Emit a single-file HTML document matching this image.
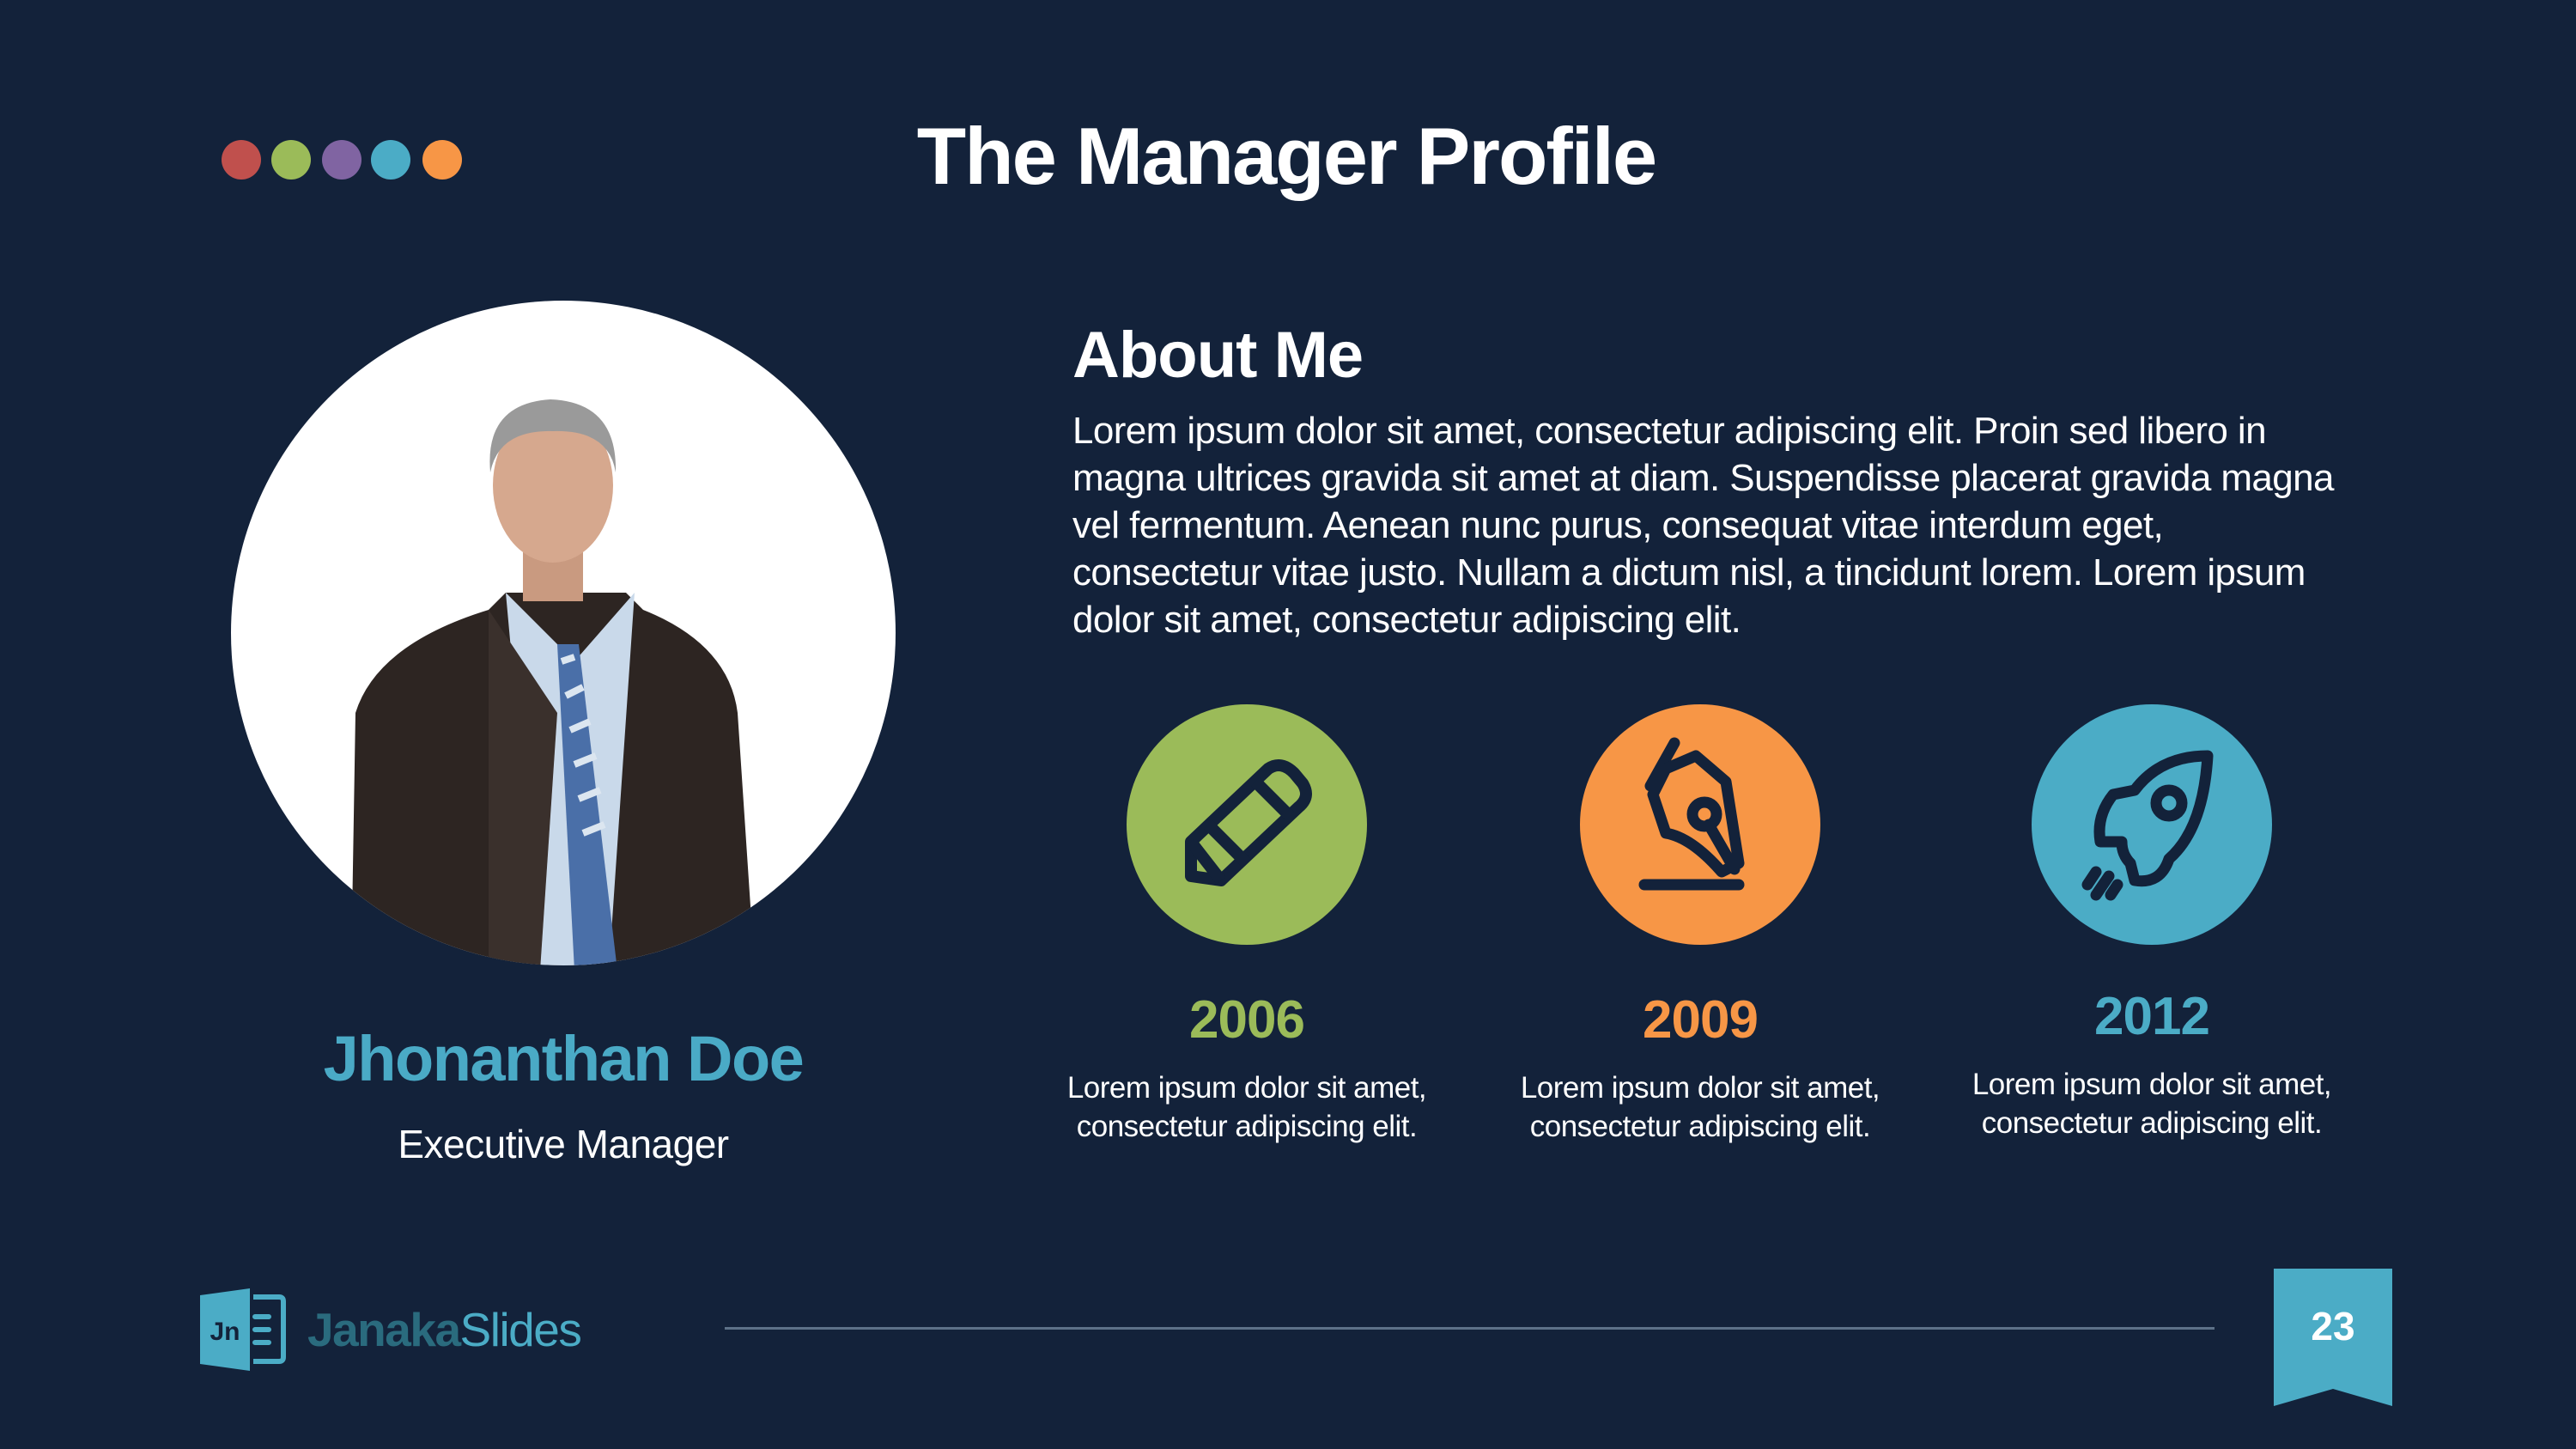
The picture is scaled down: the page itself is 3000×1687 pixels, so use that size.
<!DOCTYPE html>
<html><head><meta charset="utf-8"><style>
*{margin:0;padding:0;box-sizing:border-box}
body{width:3000px;height:1687px;background:#13223a;overflow:hidden;position:relative;font-family:"Liberation Sans",sans-serif;color:#fff}
.a{position:absolute}
.dot{position:absolute;width:46px;height:46px;border-radius:50%;top:163px}
.c{text-align:center}
.p{left:1249px;top:474px;font-size:44px;line-height:55px;letter-spacing:-0.6px;white-space:nowrap}
.yr{font-size:62px;font-weight:bold;width:560px;text-align:center;letter-spacing:-1px}
.cap{font-size:35px;line-height:45px;width:560px;text-align:center;letter-spacing:-0.5px;white-space:nowrap}
</style></head><body>
<div class="dot" style="left:258px;background:#c0504d"></div>
<div class="dot" style="left:316px;background:#9bbb59"></div>
<div class="dot" style="left:375px;background:#8064a2"></div>
<div class="dot" style="left:432px;background:#4bacc6"></div>
<div class="dot" style="left:492px;background:#f79646"></div>
<div class="a c" style="left:900px;width:1196px;top:128px;font-size:94px;font-weight:bold;letter-spacing:-2px">The Manager Profile</div>

<svg class="a" style="left:269px;top:350px" width="774" height="774" viewBox="0 0 774 774">
<defs><clipPath id="cp"><circle cx="387" cy="387" r="387"/></clipPath></defs>
<circle cx="387" cy="387" r="387" fill="#fff"/>
<g clip-path="url(#cp)">
<path d="M145 480 Q170 400 300 360 L320 340 L460 340 L480 360 Q580 400 590 480 L610 780 L140 780 Z" fill="#2d2522"/>
<path d="M320 340 L400 420 L470 340 L440 780 L360 780 Z" fill="#c9d9ea"/>
<path d="M380 400 L405 400 L450 780 L400 780 Z" fill="#4a6fa8"/>
<path d="M385 420 L400 415 M390 460 L410 450 M395 500 L418 490 M400 540 L425 530 M405 580 L430 570 M410 620 L435 610" stroke="#dce6f0" stroke-width="8"/>
<path d="M300 360 L380 480 L360 780 L300 780 Z" fill="#3a302c"/>
<rect x="340" y="250" width="70" height="100" fill="#c99a80"/>
<ellipse cx="375" cy="215" rx="70" ry="90" fill="#d6a88e"/>
<path d="M302 200 Q295 120 372 115 Q450 118 448 200 Q440 150 375 152 Q312 150 302 200 Z" fill="#9a9a9a"/>
</g>
</svg>
<div class="a c" style="left:256px;width:800px;top:1190px;font-size:74px;font-weight:bold;color:#4aaac6;letter-spacing:-1.5px">Jhonanthan Doe</div>
<div class="a c" style="left:256px;width:800px;top:1305px;font-size:46px;letter-spacing:-0.5px">Executive Manager</div>

<div class="a" style="left:1249px;top:370px;font-size:76px;font-weight:bold;letter-spacing:-1px">About Me</div>
<div class="a p">Lorem ipsum dolor sit amet, consectetur adipiscing elit. Proin sed libero in<br>magna ultrices gravida sit amet at diam. Suspendisse placerat gravida magna<br>vel fermentum. Aenean nunc purus, consequat vitae interdum eget,<br>consectetur vitae justo. Nullam a dictum nisl, a tincidunt lorem. Lorem ipsum<br>dolor sit amet, consectetur adipiscing elit.</div>

<svg class="a" style="left:1312px;top:820px" width="280" height="280" viewBox="0 0 280 280">
<circle cx="140" cy="140" r="140" fill="#9bbb59"/>
<g fill="none" stroke="#13223a" stroke-width="14" stroke-linejoin="round">
<path d="M75 200 L75 160 L165 75 Q180 65 195 80 L205 92 Q215 108 200 120 L110 205 Z"/>
<path d="M75 160 L110 205 M95 140 L140 185 M150 90 L190 130"/>
</g></svg>
<svg class="a" style="left:1840px;top:820px" width="280" height="280" viewBox="0 0 280 280">
<circle cx="140" cy="140" r="140" fill="#f79646"/>
<g fill="none" stroke="#13223a" stroke-width="13" stroke-linejoin="round" stroke-linecap="round">
<path d="M82 95 L110 45"/>
<path d="M100 75 L135 60 L170 90 L185 185 L165 195 Q130 155 100 150 L85 105 Z"/>
<circle cx="145" cy="128" r="14"/>
<path d="M150 140 L180 192"/>
<path d="M75 210 L185 210"/>
</g></svg>
<svg class="a" style="left:2366px;top:820px" width="280" height="280" viewBox="0 0 280 280">
<circle cx="140" cy="140" r="140" fill="#4bacc6"/>
<g fill="none" stroke="#13223a" stroke-width="13" stroke-linejoin="round" stroke-linecap="round">
<path d="M205 60 Q150 60 120 100 L95 105 Q75 130 80 160 L105 160 Q105 175 115 185 L120 205 Q150 210 160 180 Q200 145 205 60 Z"/>
<circle cx="160" cy="115" r="15"/>
<path d="M75 195 L65 210 M90 200 L75 222 M100 210 L92 222"/>
</g></svg>

<div class="a yr" style="left:1172px;top:1152px;color:#9bbb59">2006</div>
<div class="a yr" style="left:1700px;top:1152px;color:#f79646">2009</div>
<div class="a yr" style="left:2226px;top:1148px;color:#4bacc6">2012</div>
<div class="a cap" style="left:1172px;top:1244px">Lorem ipsum dolor sit amet,<br>consectetur adipiscing elit.</div>
<div class="a cap" style="left:1700px;top:1244px">Lorem ipsum dolor sit amet,<br>consectetur adipiscing elit.</div>
<div class="a cap" style="left:2226px;top:1240px">Lorem ipsum dolor sit amet,<br>consectetur adipiscing elit.</div>

<svg class="a" style="left:233px;top:1500px" width="100" height="96" viewBox="0 0 100 96">
<path d="M0 8 L58 0 L58 96 L0 88 Z" fill="#4bacc6"/>
<path d="M62 10 L92 10 Q97 10 97 15 L97 80 Q97 85 92 85 L62 85" fill="none" stroke="#4bacc6" stroke-width="6"/>
<path d="M64 33 L80 33 M64 48 L80 48 M64 63 L80 63" stroke="#4bacc6" stroke-width="6" stroke-linecap="round"/>
<text x="29" y="60" fill="#13223a" font-family="Liberation Sans" font-weight="bold" font-size="30" text-anchor="middle">Jn</text>
</svg>
<div class="a" style="left:358px;top:1516px;font-size:55px;letter-spacing:-1.5px"><b style="color:#2a6b7e">Janaka</b><span style="color:#4bacc6">Slides</span></div>
<div class="a" style="left:844px;top:1545px;width:1735px;height:3px;background:#5d7188"></div>
<svg class="a" style="left:2648px;top:1477px" width="138" height="160" viewBox="0 0 138 160">
<path d="M0 0 H138 V160 L69 140 L0 160 Z" fill="#4bacc6"/>
<text x="69" y="83" fill="#fff" font-family="Liberation Sans" font-weight="bold" font-size="46" text-anchor="middle">23</text>
</svg>
</body></html>
